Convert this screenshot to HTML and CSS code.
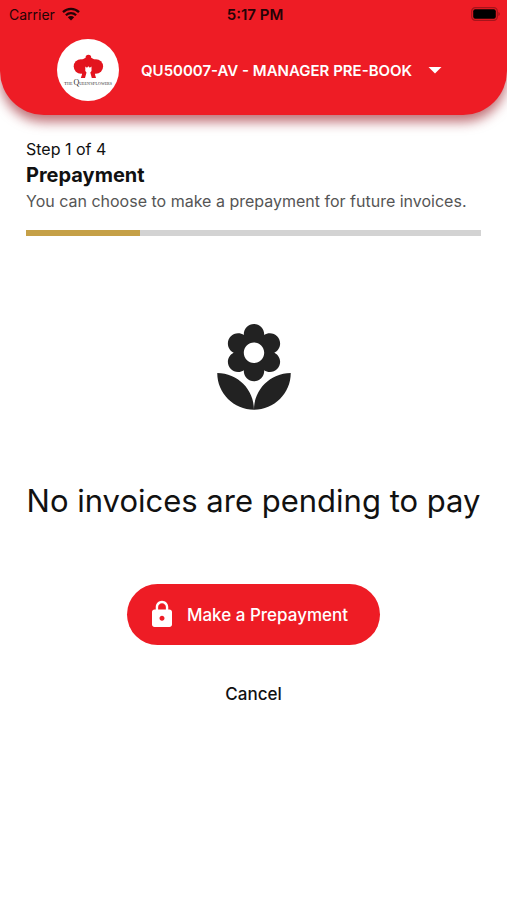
FILE: index.html
```html
<!DOCTYPE html>
<html lang="en">
<head>
  <meta charset="utf-8">
  <meta name="viewport" content="width=device-width, initial-scale=1">
  <title>Prepayment</title>
  <link rel="stylesheet" href="styles.css">
</head>
<body>
  <header class="header">
    <div class="status">
      <div class="carrier">
        <span>Carrier</span>
        <svg class="wifi" viewBox="0 0 18 14" aria-hidden="true">
          <path d="M1 5.2a11.5 11.5 0 0 1 16 0M3.9 8.2a7.3 7.3 0 0 1 10.2 0" fill="none" stroke="currentColor" stroke-width="2.3"/>
          <path d="M9 13.6 5.8 10.3a4.6 4.6 0 0 1 6.4 0z" fill="currentColor"/>
        </svg>
      </div>
      <span class="time">5:17 PM</span>
      <svg class="battery" viewBox="0 0 30 14" aria-hidden="true">
        <rect x=".7" y=".7" width="25.6" height="12.6" rx="3.6" fill="none" stroke="#a5141b" stroke-width="1.2"/>
        <rect x="2.2" y="2.2" width="22.6" height="9.6" rx="2" fill="#000"/>
        <path d="M27.5 5v4c1.6-.6 1.6-3.4 0-4z" fill="#8f1016"/>
      </svg>
    </div>
    <div class="account">
      <svg class="logo" viewBox="0 0 62 62" role="img" aria-label="The Queen's Flowers">
        <circle cx="31" cy="31" r="31" fill="#fff"/>
        <g fill="#e3141e">
          <circle cx="31.400" cy="18.500" r="2.800"/>
          <ellipse cx="31.400" cy="25" rx="8.500" ry="6.500"/>
          <ellipse cx="24" cy="27.500" rx="7.300" ry="7.300"/>
          <ellipse cx="38.800" cy="27.500" rx="7.300" ry="7.300"/>
          <path d="M25 30h13v5.500l1 3.500H23.800l1.200-3.500z"/>
        </g>
        <path d="M28.300 27.500l1.700 1.200 1.400-1.500 1.400 1.500 1.700-1.200v4.500l-1.200 1.500 1.500 5.500h-6.800l1.500-5.500-1.200-1.500z" fill="#fff"/>
        <text x="31" y="45.500" text-anchor="middle" class="logo-name"><tspan>T</tspan><tspan class="logo-small">HE </tspan><tspan class="logo-big">Q</tspan><tspan class="logo-small">UEEN'S</tspan><tspan>F</tspan><tspan class="logo-small">LOWERS</tspan></text>
      </svg>
      <button class="picker" type="button">
        <span>QU50007-AV - MANAGER PRE-BOOK</span>
        <svg class="arrow" viewBox="0 0 14 7" aria-hidden="true"><path d="M.5 0h13L7 6.500z" fill="currentColor"/></svg>
      </button>
    </div>
  </header>

  <main class="content">
    <section class="intro">
      <p class="step">Step 1 of 4</p>
      <h1 class="title">Prepayment</h1>
      <p class="hint">You can choose to make a prepayment for future invoices.</p>
      <div class="progress" role="progressbar" aria-label="Step" aria-valuemin="0" aria-valuemax="4" aria-valuenow="1">
        <div class="progress-value"></div>
      </div>
    </section>

    <section class="empty">
      <svg class="flower" viewBox="0 0 24 24" aria-hidden="true">
        <path fill="currentColor" d="M12 22c4.97 0 9-4.030 9-9-4.970 0-9 4.030-9 9zM5.600 10.250c0 1.380 1.120 2.500 2.500 2.500.530 0 1.010-.160 1.420-.440l-.020.190c0 1.380 1.120 2.500 2.500 2.500s2.500-1.120 2.500-2.500l-.020-.190c.400.280.890.440 1.420.440 1.380 0 2.500-1.120 2.500-2.500 0-1-.590-1.850-1.430-2.250.840-.400 1.430-1.250 1.430-2.250 0-1.380-1.120-2.500-2.500-2.500-.530 0-1.010.160-1.420.440l.020-.190C14.500 2.120 13.380 1 12 1S9.500 2.120 9.500 3.500l.020.190c-.400-.280-.890-.440-1.420-.440-1.380 0-2.500 1.120-2.500 2.500 0 1 .590 1.850 1.430 2.250-.840.400-1.430 1.250-1.430 2.250zM12 5.500c1.380 0 2.500 1.120 2.500 2.500s-1.120 2.500-2.500 2.500S9.500 9.380 9.500 8s1.120-2.500 2.500-2.500zM3 13c0 4.970 4.030 9 9 9 0-4.970-4.030-9-9-9z"/>
      </svg>
      <h2 class="message">No invoices are pending to pay</h2>
    </section>

    <div class="actions">
      <button class="primary" type="button">
        <svg class="lock" viewBox="0 0 24 24" aria-hidden="true">
          <path fill="currentColor" d="M18 8h-1V6c0-2.760-2.240-5-5-5S7 3.240 7 6v2H6c-1.100 0-2 .900-2 2v10c0 1.100.900 2 2 2h12c1.100 0 2-.900 2-2V10c0-1.100-.900-2-2-2zm-6 9c-1.100 0-2-.900-2-2s.900-2 2-2 2 .900 2 2-.900 2-2 2zm3.100-9H8.900V6c0-1.710 1.390-3.100 3.100-3.100 1.710 0 3.100 1.390 3.100 3.100v2z"/>
        </svg>
        <span>Make a Prepayment</span>
      </button>
      <button class="cancel" type="button">Cancel</button>
    </div>
  </main>
</body>
</html>
```
FILE: styles.css
```css
* {
  box-sizing: border-box;
}

body {
  margin: 0;
  background: #fff;
  color: #111;
  font-family: Inter, "Liberation Sans", sans-serif;
}

h1, h2, p {
  margin: 0;
}

button {
  padding: 0;
  border: 0;
  background: none;
  color: inherit;
  font: inherit;
  cursor: pointer;
}

svg {
  display: block;
  flex: none;
}

.header {
  padding-bottom: 14px;
  border-radius: 0 0 44px 44px;
  background: #ee1c25;
  box-shadow: 0 7px 12px rgba(150, 20, 30, 0.6);
}

.status {
  display: grid;
  grid-template-columns: 1fr auto 1fr;
  align-items: center;
  height: 28px;
  padding: 0 6px 0 9px;
  color: #240306;
  font-size: 14px;
}

.carrier {
  display: flex;
  align-items: center;
  gap: 7px;
}

.wifi {
  width: 18px;
  height: 14px;
}

.time {
  font-size: 15px;
  font-weight: 600;
}

.battery {
  width: 30px;
  height: 14px;
  justify-self: end;
}

.account {
  display: flex;
  align-items: center;
  gap: 22px;
  padding: 11px 57px 0;
}

.logo {
  width: 62px;
  height: 62px;
}

.logo-name {
  fill: #333;
  font-family: "Liberation Serif", serif;
  font-size: 5px;
}

.logo-small {
  font-size: 4px;
}

.logo-big {
  font-size: 8px;
}

.picker {
  display: flex;
  align-items: center;
  gap: 16px;
  color: #fff;
  font-size: 15px;
  font-weight: 600;
  white-space: nowrap;
}

.arrow {
  width: 14px;
  height: 7px;
}

.content {
  padding: 23px 26px;
}

.step {
  font-size: 16px;
  line-height: 22px;
}

.title {
  font-size: 20px;
  font-weight: 700;
  line-height: 30px;
}

.hint {
  color: #555;
  font-size: 16px;
  line-height: 22px;
}

.progress {
  height: 6px;
  margin-top: 18px;
  background: #d3d3d3;
}

.progress-value {
  width: 25%;
  height: 100%;
  background: #c5a047;
}

.empty {
  display: flex;
  flex-direction: column;
  align-items: center;
  gap: 63px;
  margin-top: 84px;
}

.flower {
  width: 98px;
  height: 98px;
  color: #222;
}

.message {
  font-size: 31px;
  font-weight: 400;
  line-height: 40px;
  text-align: center;
}

.actions {
  display: flex;
  flex-direction: column;
  align-items: center;
  gap: 36px;
  margin-top: 63px;
}

.primary {
  display: flex;
  align-items: center;
  gap: 10px;
  padding: 15px 32px 15px 20px;
  border-radius: 31px;
  background: #ee1c25;
  color: #fff;
  font-size: 17px;
  font-weight: 500;
}

.lock {
  width: 30px;
  height: 31px;
}

.cancel {
  font-size: 17px;
  font-weight: 500;
  line-height: 26px;
}
```
